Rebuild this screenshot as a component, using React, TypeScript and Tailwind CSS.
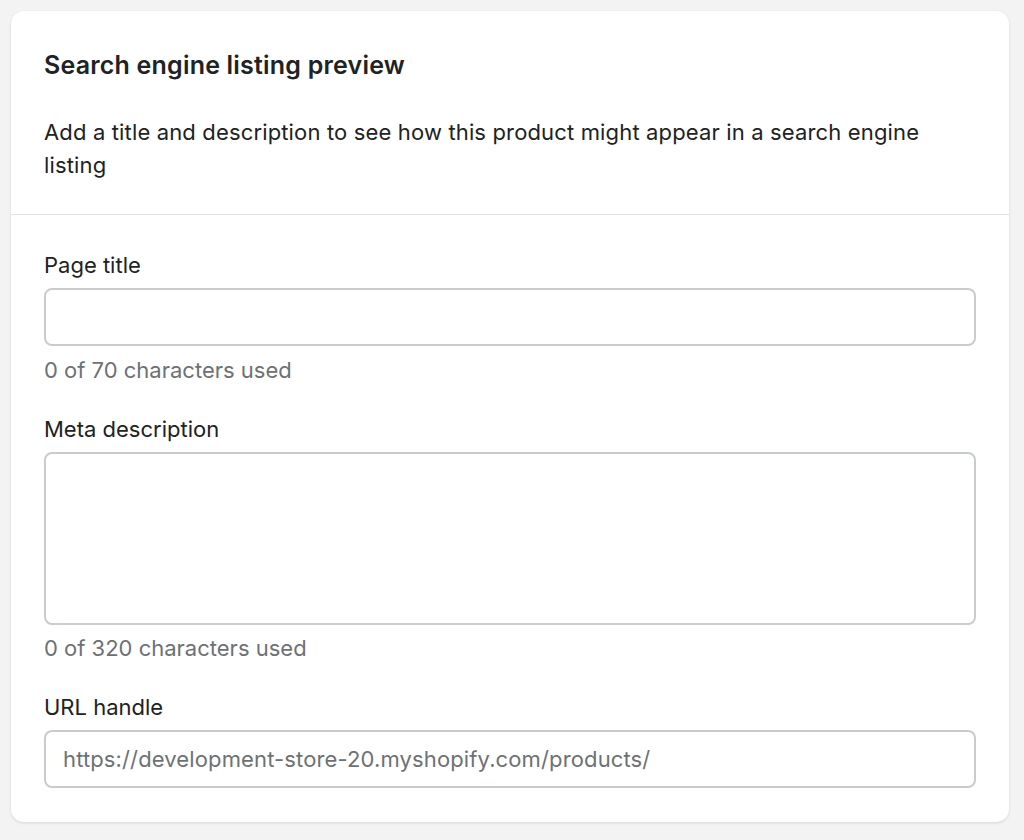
import React from "react";

const font = { fontFamily: "Inter, 'Noto Sans', 'Liberation Sans', sans-serif" };

export default function App() {
  return (
    <div
      className="w-[1024px] h-[840px] bg-[#f3f3f3] pt-[11px] pl-[11px] pr-[15px]"
      style={font}
    >
      <div className="w-[998px] rounded-[13px] bg-white shadow-[0_1px_3px_rgba(0,0,0,0.12)]">
        <div className="px-[33px] pt-[39px] pb-[32px] border-b border-[#e1e3e5]">
          <h2 className="text-[25px] leading-[30px] font-semibold tracking-[0.2px] text-[#202223]">
            Search engine listing preview
          </h2>
          <p className="mt-[36px] text-[22px] leading-[33px] tracking-[0.15px] text-[#202223]">
            Add a title and description to see how this product might appear in a search engine listing
          </p>
        </div>
        <div className="px-[33px] pt-[34px] pb-[34px]">
          <label className="block text-[22px] leading-[33px] text-[#202223]">Page title</label>
          <div className="mt-[6px] h-[58px] rounded-[8px] border-2 border-[#c9cccf] bg-white" />
          <p className="mt-[8px] text-[22px] leading-[33px] text-[#6d7175]">0 of 70 characters used</p>

          <label className="mt-[26px] block text-[22px] leading-[33px] text-[#202223]">Meta description</label>
          <div className="mt-[6px] h-[173px] rounded-[8px] border-2 border-[#c9cccf] bg-white" />
          <p className="mt-[7px] text-[22px] leading-[33px] text-[#6d7175]">0 of 320 characters used</p>

          <label className="mt-[26px] block text-[22px] leading-[33px] text-[#202223]">URL handle</label>
          <div className="mt-[6px] h-[58px] rounded-[8px] border-2 border-[#c9cccf] bg-white flex items-center px-[17px]">
            <span className="text-[22px] tracking-[0.13px] text-[#6d7175]">https://development-store-20.myshopify.com/products/</span>
          </div>
        </div>
      </div>
    </div>
  );
}
